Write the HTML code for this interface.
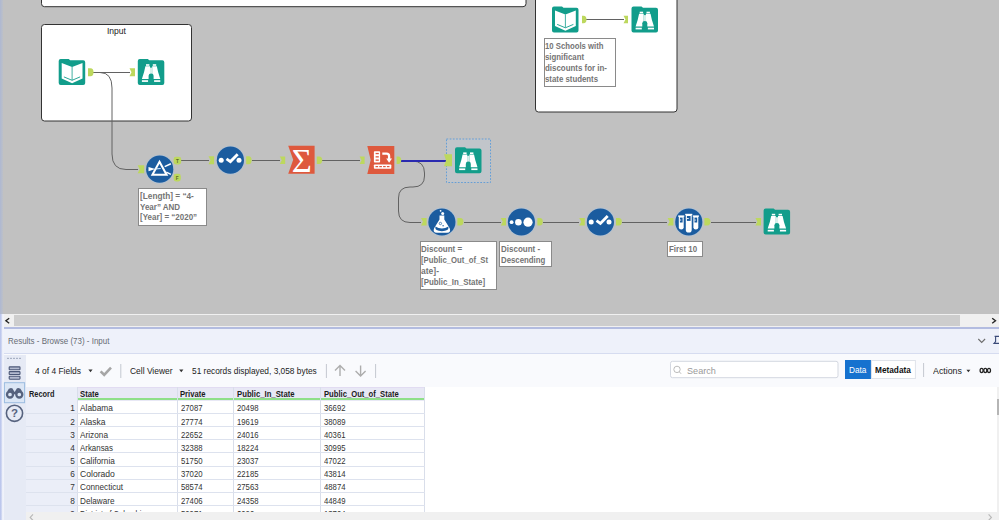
<!DOCTYPE html>
<html><head><meta charset="utf-8"><title>Workflow</title><style>
html,body{margin:0;padding:0}
body{width:999px;height:520px;overflow:hidden;position:relative;background:#c1c1c1;font-family:"Liberation Sans",sans-serif}
#cv{position:absolute;left:0;top:0}
.t{position:absolute;white-space:pre;line-height:1.15;display:inline-block}
.ann{position:absolute;box-sizing:border-box;background:#fff;border:1px solid #8a8a8a}
</style></head><body>
<svg id="cv" width="999" height="314" viewBox="0 0 999 314">
<rect x="41.5" y="-5" width="484.5" height="11.7" rx="3" fill="#fff" stroke="#333" stroke-width="1"/>
<rect x="41.5" y="24.5" width="150" height="96.5" rx="3" fill="#fff" stroke="#333" stroke-width="1"/>
<rect x="535.5" y="-5" width="141.5" height="117" rx="3" fill="#fff" stroke="#333" stroke-width="1"/>
<rect x="446.5" y="139" width="44" height="43.5" fill="#c1c5ca" stroke="#5a9ad8" stroke-width="0.9" stroke-dasharray="1.7,1.5"/>
<path d="M93,72.5 H130" fill="none" stroke="#626262" stroke-width="1"/>
<path d="M93,72.5 H100 Q112,72.5 112,88 V154 Q112,169.5 126,169.5 H138" fill="none" stroke="#626262" stroke-width="1"/>
<path d="M586,19.5 H624" fill="none" stroke="#626262" stroke-width="1"/>
<path d="M181,160.5 H209" fill="none" stroke="#626262" stroke-width="1"/>
<path d="M252,160.5 H280" fill="none" stroke="#626262" stroke-width="1"/>
<path d="M322,160.5 H360" fill="none" stroke="#626262" stroke-width="1"/>
<path d="M401,161 H412 Q424.5,161 424.5,173 V176 Q424.5,187 413,187 H410 Q398.5,187 398.5,198 V211 Q398.5,222.5 410,222.5 H421" fill="none" stroke="#626262" stroke-width="1"/>
<path d="M401,161 H446" fill="none" stroke="#2a2ab0" stroke-width="2"/>
<path d="M464,222.5 H501" fill="none" stroke="#626262" stroke-width="1"/>
<path d="M543,222.5 H579" fill="none" stroke="#626262" stroke-width="1"/>
<path d="M622,222.5 H667" fill="none" stroke="#626262" stroke-width="1"/>
<path d="M711,222.5 H756" fill="none" stroke="#626262" stroke-width="1"/>
<path d="M60.7,59 h8 l1.5,1.2 h13.0 q2,0 2,2 v20.8 q0,2 -2,2 h-22.5 q-2,0 -2,-2 v-22 q0,-2 2,-2z" fill="#129d8b"/><path d="M61.7,63 L72.1,66.9 L82.5,63 V78.6 L72.1,83.3 L61.7,78.6z" fill="#fff"/><path d="M72.1,66.9 v13.2" stroke="#129d8b" stroke-width="0.8" fill="none"/><path d="M63.9,76.9 L72.1,80.3 L80.1,76.9" stroke="#129d8b" stroke-width="0.9" fill="none"/>
<path d="M88,68.3h2.5q3,0 3,4.0q0,4.0 -3,4.0h-2.5z" fill="#bdd85e"/>
<path d="M129.5,68.3h5.5v8h-5.5l2,-4.0z" fill="#bdd85e"/>
<path d="M139.8,59 h8 l1.5,1.2 h13.0 q2,0 2,2 v20.8 q0,2 -2,2 h-22.5 q-2,0 -2,-2 v-22 q0,-2 2,-2z" fill="#129d8b"/><path d="M145.4,66.3 L150,66.3 L150,79 L141.9,79 Q144.5,71.5 145.4,66.3 Z" fill="#fff"/><rect x="146" y="64.2" width="3.4" height="1.6" fill="#fff"/><rect x="141.9" y="80.2" width="6.2" height="1.7" fill="#fff"/><path d="M156.8,66.3 L152.2,66.3 L152.2,79 L160.3,79 Q157.7,71.5 156.8,66.3 Z" fill="#fff"/><rect x="152.8" y="64.2" width="3.4" height="1.6" fill="#fff"/><rect x="154.1" y="80.2" width="6.2" height="1.7" fill="#fff"/><rect x="149.9" y="67.6" width="2.4" height="7" fill="#d8efeb"/><path d="M148.6,82 v-6.3 q0,-2.3 2.5,-2.3 q2.5,0 2.5,2.3 v6.3z" fill="#129d8b"/>
<path d="M554,6.5 h8 l1.5,1.2 h13.0 q2,0 2,2 v20.8 q0,2 -2,2 h-22.5 q-2,0 -2,-2 v-22 q0,-2 2,-2z" fill="#129d8b"/><path d="M555,10.5 L565.4,14.4 L575.8,10.5 V26.1 L565.4,30.8 L555,26.1z" fill="#fff"/><path d="M565.4,14.4 v13.2" stroke="#129d8b" stroke-width="0.8" fill="none"/><path d="M557.2,24.4 L565.4,27.8 L573.4,24.4" stroke="#129d8b" stroke-width="0.9" fill="none"/>
<path d="M582,15.7h1.5q3,0 3,3.8q0,3.8 -3,3.8h-1.5z" fill="#bdd85e"/>
<path d="M623.5,15.7h4.5v7.6h-4.5l2,-3.8z" fill="#bdd85e"/>
<path d="M633.5,6.5 h8 l1.5,1.2 h13.0 q2,0 2,2 v20.8 q0,2 -2,2 h-22.5 q-2,0 -2,-2 v-22 q0,-2 2,-2z" fill="#129d8b"/><path d="M639.1,13.8 L643.7,13.8 L643.7,26.5 L635.6,26.5 Q638.2,19.0 639.1,13.8 Z" fill="#fff"/><rect x="639.7" y="11.7" width="3.4" height="1.6" fill="#fff"/><rect x="635.6" y="27.7" width="6.2" height="1.7" fill="#fff"/><path d="M650.5,13.8 L645.9,13.8 L645.9,26.5 L654.0,26.5 Q651.4,19.0 650.5,13.8 Z" fill="#fff"/><rect x="646.5" y="11.7" width="3.4" height="1.6" fill="#fff"/><rect x="647.8" y="27.7" width="6.2" height="1.7" fill="#fff"/><rect x="643.6" y="15.1" width="2.4" height="7" fill="#d8efeb"/><path d="M642.3,29.5 v-6.3 q0,-2.3 2.5,-2.3 q2.5,0 2.5,2.3 v6.3z" fill="#129d8b"/>
<path d="M137.7,165.3h6.5v8h-6.5l2,-4.0z" fill="#bdd85e"/>
<circle cx="159.7" cy="169.2" r="14.5" fill="#a9c3de" opacity="0.55"/><circle cx="159.7" cy="169.2" r="13.6" fill="#1b5c9f"/><path d="M159.5,161.8 L166.6,174.7 H152.4 Z" fill="none" stroke="#fff" stroke-width="2" stroke-linejoin="miter"/><path d="M148.5,166.9 L155.3,169.0 L148.5,171.2 Z" fill="#fff"/><path d="M155.3,169.0 L160.7,168.5" stroke="#d6ecff" stroke-width="1.1"/><path d="M164.7,166.6 L170.9,163.8" stroke="#fff" stroke-width="1.5"/><path d="M166.3,172.1 L170.9,174.4" stroke="#fff" stroke-width="1.5"/>
<rect x="173.6" y="156.8" width="7.6" height="7.6" rx="2.4" fill="#bdd85e"/><rect x="173.6" y="173.8" width="7.2" height="7.6" rx="2.4" fill="#bdd85e"/>
<text x="177.4" y="162.6" font-family="'Liberation Sans',sans-serif" font-size="4.6" font-weight="700" fill="#5d6a28" text-anchor="middle">T</text>
<text x="177.2" y="179.6" font-family="'Liberation Sans',sans-serif" font-size="4.6" font-weight="700" fill="#5d6a28" text-anchor="middle">F</text>
<path d="M208.5,156.3h5.6v8h-5.6l2,-4.0z" fill="#bdd85e"/>
<circle cx="230.4" cy="160.2" r="14.5" fill="#a9c3de" opacity="0.55"/><circle cx="230.4" cy="160.2" r="13.6" fill="#1b5c9f"/><circle cx="221.2" cy="160.2" r="2.5" fill="#fff"/><circle cx="239.0" cy="160.2" r="2.5" fill="#fff"/><path d="M226.5,158.8 L230.4,161.6 L237.7,154.2" fill="none" stroke="#fff" stroke-width="2.8"/>
<path d="M246.2,156.3h2.4q3,0 3,4.0q0,4.0 -3,4.0h-2.4z" fill="#bdd85e"/>
<path d="M279.8,156.5h5.4v7.4h-5.4l2,-3.7z" fill="#bdd85e"/>
<path d="M288.2,145.8 H314.6 V173.8 H288.2 L293.2,159.8 Z" fill="#de593d"/><text x="301.9" y="171.9" font-family="'Liberation Serif',serif" font-size="34.5" fill="#fff" text-anchor="middle">Σ</text>
<path d="M316.8,156.5h2.4q3,0 3,3.7q0,3.7 -3,3.7h-2.4z" fill="#bdd85e"/>
<path d="M359.6,156.6h5v7.4h-5l2,-3.7z" fill="#bdd85e"/>
<path d="M367.3,146 H394.3 V174 H367.3 L370.7,160.0 Z" fill="#de593d"/><rect x="373.9" y="151.2" width="6.2" height="11.4" rx="0.8" fill="#fff"/><rect x="375.6" y="152.9" width="3.2" height="1.3" fill="#de593d"/><rect x="375.6" y="156.2" width="3.2" height="1.3" fill="#de593d"/><rect x="375.6" y="159.5" width="3.2" height="1.3" fill="#de593d"/><rect x="373.9" y="164.4" width="17.4" height="4.4" rx="0.8" fill="#fff"/><rect x="375.5" y="166" width="2.6" height="1.2" fill="#de593d"/><rect x="379.3" y="166" width="2.6" height="1.2" fill="#de593d"/><rect x="383.1" y="166" width="2.6" height="1.2" fill="#de593d"/><rect x="386.9" y="166" width="2.6" height="1.2" fill="#de593d"/><path d="M382.3,153.6 h4.2 q2.6,0 2.6,2.6 v3" fill="none" stroke="#fff" stroke-width="2.3"/><path d="M386.2,158.4 h5.8 l-2.9,4.4z" fill="#fff"/>
<path d="M396.6,156.6h1.6q3,0 3,3.7q0,3.7 -3,3.7h-1.6z" fill="#bdd85e"/>
<path d="M444,154.2h8v12h-8l2,-6.0z" fill="#bdd85e"/>
<path d="M457,147.2 h8 l1.5,1.2 h13.0 q2,0 2,2 v20.8 q0,2 -2,2 h-22.5 q-2,0 -2,-2 v-22 q0,-2 2,-2z" fill="#129d8b"/><path d="M462.6,154.5 L467.2,154.5 L467.2,167.2 L459.1,167.2 Q461.7,159.7 462.6,154.5 Z" fill="#fff"/><rect x="463.2" y="152.4" width="3.4" height="1.6" fill="#fff"/><rect x="459.1" y="168.4" width="6.2" height="1.7" fill="#fff"/><path d="M474.0,154.5 L469.4,154.5 L469.4,167.2 L477.5,167.2 Q474.9,159.7 474.0,154.5 Z" fill="#fff"/><rect x="470.0" y="152.4" width="3.4" height="1.6" fill="#fff"/><rect x="471.3" y="168.4" width="6.2" height="1.7" fill="#fff"/><rect x="467.1" y="155.8" width="2.4" height="7" fill="#d8efeb"/><path d="M465.8,170.2 v-6.3 q0,-2.3 2.5,-2.3 q2.5,0 2.5,2.3 v6.3z" fill="#129d8b"/>
<path d="M421,218.1h5.6v7.4h-5.6l2,-3.7z" fill="#bdd85e"/>
<circle cx="441.9" cy="222" r="14.5" fill="#a9c3de" opacity="0.55"/><circle cx="441.9" cy="222" r="13.6" fill="#1b5c9f"/><circle cx="440.6" cy="210.8" r="0.9" fill="#fff"/><circle cx="442.7" cy="213.4" r="1.5" fill="#fff"/><path d="M439.5,215.6 h4.8 v4 l5.4,8.6 q1.6,4.4 -2.6,4.6 h-10.4 q-4.2,-0.2 -2.6,-4.6 l5.4,-8.6z" fill="#fff"/><path d="M435.3,226.6 q6.6,3.8 13.2,0 q0.6,4.6 -6.6,4.7 q-7.2,-0.1 -6.6,-4.7z" fill="#1b5c9f"/><circle cx="440.4" cy="223.5" r="1.2" fill="none" stroke="#1b5c9f" stroke-width="0.7"/><circle cx="443.1" cy="225.8" r="0.7" fill="#1b5c9f"/>
<path d="M457.4,218.1h3q3,0 3,3.7q0,3.7 -3,3.7h-3z" fill="#bdd85e"/>
<path d="M500.8,218.1h5.2v7.4h-5.2l2,-3.7z" fill="#bdd85e"/>
<circle cx="521.4" cy="222" r="14.5" fill="#a9c3de" opacity="0.55"/><circle cx="521.4" cy="222" r="13.6" fill="#1b5c9f"/><circle cx="511.6" cy="222.2" r="1.9" fill="#fff"/><circle cx="518.4" cy="222.2" r="3.3" fill="#fff"/><circle cx="528.0" cy="222.2" r="4.6" fill="#fff"/>
<path d="M537.4,218.1h2.4q3,0 3,3.7q0,3.7 -3,3.7h-2.4z" fill="#bdd85e"/>
<path d="M579.2,218.1h5.6v7.4h-5.6l2,-3.7z" fill="#bdd85e"/>
<circle cx="600.4" cy="222" r="14.5" fill="#a9c3de" opacity="0.55"/><circle cx="600.4" cy="222" r="13.6" fill="#1b5c9f"/><circle cx="591.2" cy="222" r="2.5" fill="#fff"/><circle cx="609.0" cy="222" r="2.5" fill="#fff"/><path d="M596.5,220.6 L600.4,223.4 L607.7,216" fill="none" stroke="#fff" stroke-width="2.8"/>
<path d="M616,218.1h2.8q3,0 3,3.7q0,3.7 -3,3.7h-2.8z" fill="#bdd85e"/>
<path d="M667.6,218.1h5.8v7.4h-5.8l2,-3.7z" fill="#bdd85e"/>
<circle cx="688.8" cy="222" r="14.5" fill="#a9c3de" opacity="0.55"/><circle cx="688.8" cy="222" r="13.6" fill="#1b5c9f"/><path d="M678.8,216 h4.9 v11.15 a2.45,2.45 0 0 1 -4.9,0z" fill="#fff"/><rect x="678.2" y="215.4" width="6.1" height="1.4" fill="#fff"/><rect x="679.9" y="217.6" width="2.7" height="4.9" fill="#1b5c9f"/><rect x="679.9" y="219.6" width="1.35" height="0.9" fill="#fff"/><path d="M685.8,214.4 h5.9 v15.25 a2.95,2.95 0 0 1 -5.9,0z" fill="#fff"/><rect x="685.2" y="213.8" width="7.1" height="1.4" fill="#fff"/><rect x="686.9" y="216.0" width="3.7" height="4.9" fill="#1b5c9f"/><rect x="686.9" y="218.0" width="1.85" height="0.9" fill="#fff"/><path d="M693.4,216 h4.9 v11.15 a2.45,2.45 0 0 1 -4.9,0z" fill="#fff"/><rect x="692.8" y="215.4" width="6.1" height="1.4" fill="#fff"/><rect x="694.5" y="217.6" width="2.7" height="4.9" fill="#1b5c9f"/><rect x="694.5" y="219.6" width="1.35" height="0.9" fill="#fff"/>
<path d="M704.4,218.1h3q3,0 3,3.7q0,3.7 -3,3.7h-3z" fill="#bdd85e"/>
<path d="M755.4,218.1h5.6v7.4h-5.6l2,-3.7z" fill="#bdd85e"/>
<path d="M765.6,208.6 h8 l1.5,1.2 h13.0 q2,0 2,2 v20.8 q0,2 -2,2 h-22.5 q-2,0 -2,-2 v-22 q0,-2 2,-2z" fill="#129d8b"/><path d="M771.2,215.9 L775.8,215.9 L775.8,228.6 L767.7,228.6 Q770.3,221.1 771.2,215.9 Z" fill="#fff"/><rect x="771.8" y="213.8" width="3.4" height="1.6" fill="#fff"/><rect x="767.7" y="229.8" width="6.2" height="1.7" fill="#fff"/><path d="M782.6,215.9 L778.0,215.9 L778.0,228.6 L786.1,228.6 Q783.5,221.1 782.6,215.9 Z" fill="#fff"/><rect x="778.6" y="213.8" width="3.4" height="1.6" fill="#fff"/><rect x="779.9" y="229.8" width="6.2" height="1.7" fill="#fff"/><rect x="775.7" y="217.2" width="2.4" height="7" fill="#d8efeb"/><path d="M774.4,231.6 v-6.3 q0,-2.3 2.5,-2.3 q2.5,0 2.5,2.3 v6.3z" fill="#129d8b"/>
</svg>
<div class="ann" style="left:543.7px;top:38.2px;width:72.2px;height:48.6px"></div><span class="t" id="t0" style="left:545.0px;top:41.8px;font-size:8.6px;font-weight:700;color:#747474;transform-origin:left top;transform:scaleX(0.9);">10 Schools with</span><span class="t" id="t1" style="left:545.0px;top:52.7px;font-size:8.6px;font-weight:700;color:#747474;transform-origin:left top;transform:scaleX(0.91);">significant</span><span class="t" id="t2" style="left:545.0px;top:63.6px;font-size:8.6px;font-weight:700;color:#747474;transform-origin:left top;transform:scaleX(0.92);">discounts for in-</span><span class="t" id="t3" style="left:545.0px;top:74.5px;font-size:8.6px;font-weight:700;color:#747474;transform-origin:left top;transform:scaleX(0.91);">state students</span>
<div class="ann" style="left:138.3px;top:188px;width:68.6px;height:38px"></div><span class="t" id="t4" style="left:139.6px;top:191.6px;font-size:8.6px;font-weight:700;color:#747474;transform-origin:left top;transform:scaleX(0.96);">[Length] = “4-</span><span class="t" id="t5" style="left:139.6px;top:202.5px;font-size:8.6px;font-weight:700;color:#747474;transform-origin:left top;transform:scaleX(0.93);">Year” AND</span><span class="t" id="t6" style="left:139.6px;top:213.4px;font-size:8.6px;font-weight:700;color:#747474;transform-origin:left top;transform:scaleX(0.93);">[Year] = “2020”</span>
<div class="ann" style="left:420px;top:241.2px;width:76.6px;height:48.6px"></div><span class="t" id="t7" style="left:421.3px;top:244.8px;font-size:8.6px;font-weight:700;color:#747474;transform-origin:left top;transform:scaleX(0.93);">Discount =</span><span class="t" id="t8" style="left:421.3px;top:255.7px;font-size:8.6px;font-weight:700;color:#747474;transform-origin:left top;transform:scaleX(0.9);">[Public_Out_of_St</span><span class="t" id="t9" style="left:421.3px;top:266.6px;font-size:8.6px;font-weight:700;color:#747474;transform-origin:left top;transform:scaleX(0.99);">ate]-</span><span class="t" id="t10" style="left:421.3px;top:277.5px;font-size:8.6px;font-weight:700;color:#747474;transform-origin:left top;transform:scaleX(0.92);">[Public_In_State]</span>
<div class="ann" style="left:499.3px;top:241.3px;width:53.2px;height:26px"></div><span class="t" id="t11" style="left:500.6px;top:244.9px;font-size:8.6px;font-weight:700;color:#747474;transform-origin:left top;transform:scaleX(0.93);">Discount -</span><span class="t" id="t12" style="left:500.6px;top:255.8px;font-size:8.6px;font-weight:700;color:#747474;transform-origin:left top;transform:scaleX(0.91);">Descending</span>
<div class="ann" style="left:667.2px;top:241px;width:36px;height:15.8px"></div><span class="t" id="t13" style="left:668.5px;top:244.6px;font-size:8.6px;font-weight:700;color:#747474;transform-origin:left top;transform:scaleX(0.92);">First 10</span>
<span class="t" id="t14" style="left:106.6px;top:25.1px;font-size:9.6px;font-weight:400;color:#222;transform-origin:left top;transform:scaleX(0.89);">Input</span>
<div style="position:absolute;left:0;top:314px;width:999px;height:13px;background:#f0f0f0"></div>
<div style="position:absolute;left:14px;top:315px;width:946px;height:10.5px;background:#cdcdcd"></div>
<svg style="position:absolute;left:0;top:314px" width="999" height="13"><path d="M9.2,4.2 L5.9,6.7 L9.2,9.2" fill="none" stroke="#222" stroke-width="1.35"/><path d="M992.2,4.2 L995.5,6.7 L992.2,9.2" fill="none" stroke="#222" stroke-width="1.35"/></svg>
<div style="position:absolute;left:0;top:326.5px;width:999px;height:2px;background:#b3bce0"></div>
<div style="position:absolute;left:0;top:328.5px;width:999px;height:24px;background:#eef1fa"></div>
<div style="position:absolute;left:0;top:352.5px;width:999px;height:1px;background:#d6dcf0"></div>
<span class="t" id="t15" style="left:8px;top:336.4px;font-size:9.4px;font-weight:400;color:#666b73;transform-origin:left top;transform:scaleX(0.85);">Results - Browse (73) - Input</span>
<svg style="position:absolute;left:970px;top:332px" width="29" height="18"><path d="M8.3,7 L11.7,10.4 L15.1,7" fill="none" stroke="#6c6c6c" stroke-width="1.1"/><path d="M24.6,4.4 h4.4 M25.6,4.4 v5.2 l-1.6,1.8 h5" fill="none" stroke="#3a4a78" stroke-width="1.1"/></svg>
<div style="position:absolute;left:0;top:353.5px;width:999px;height:33px;background:#f9fafd"></div>
<div style="position:absolute;left:0;top:386.5px;width:999px;height:134px;background:#fff"></div>
<div style="position:absolute;left:4px;top:355px;width:21.5px;height:165px;background:#e6eaf5"></div>
<div style="position:absolute;left:0;top:0;width:3px;height:314px;background:linear-gradient(90deg,#aeb8d2,#bcc0c8)"></div>
<div style="position:absolute;left:0;top:314px;width:4px;height:206px;background:linear-gradient(90deg,#b9c4ec 0,#c2ccee 30%,#ebeef9 55%,#f2f4fb 100%)"></div>
<svg style="position:absolute;left:0;top:350px" width="30" height="80"><rect x="7.2" y="7.8" width="1.6" height="1.2" fill="#9aa3b8"/><rect x="10.2" y="7.8" width="1.6" height="1.2" fill="#9aa3b8"/><rect x="13.2" y="7.8" width="1.6" height="1.2" fill="#9aa3b8"/><rect x="16.2" y="7.8" width="1.6" height="1.2" fill="#9aa3b8"/><rect x="19.2" y="7.8" width="1.6" height="1.2" fill="#9aa3b8"/><rect x="9.2" y="16.9" width="10.8" height="2.9" rx="0.6" fill="#b4bbd0" stroke="#4b5777" stroke-width="1.1"/><rect x="9.2" y="21.6" width="10.8" height="2.9" rx="0.6" fill="#b4bbd0" stroke="#4b5777" stroke-width="1.1"/><rect x="9.2" y="26.3" width="10.8" height="2.9" rx="0.6" fill="#b4bbd0" stroke="#4b5777" stroke-width="1.1"/><rect x="4.4" y="32.7" width="20.2" height="20" fill="#dbe6f5" stroke="#9bbce0" stroke-width="1"/><g fill="none" stroke="#56627e" stroke-width="2.3"><circle cx="10" cy="44.5" r="3"/><circle cx="19.3" cy="44.5" r="3"/><path d="M8.6,41.4 Q9.4,38.9 11.6,39.3 L13.6,42.6 M20.7,41.4 Q19.9,38.9 17.7,39.3 L15.7,42.6 M13,43.2 h3.4"/></g><circle cx="14.5" cy="63.3" r="8.1" fill="none" stroke="#56627e" stroke-width="1.6"/><text x="14.5" y="67.4" font-family="'Liberation Sans',sans-serif" font-size="11.5" font-weight="700" fill="#56627e" text-anchor="middle">?</text></svg>
<span class="t" id="t16" style="left:35px;top:365.5px;font-size:9.4px;font-weight:400;color:#222;transform-origin:left top;transform:scaleX(0.9);">4 of 4 Fields</span>
<span class="t" id="t17" style="left:130px;top:365.5px;font-size:9.4px;font-weight:400;color:#222;transform-origin:left top;transform:scaleX(0.9);">Cell Viewer</span>
<span class="t" id="t18" style="left:192px;top:365.5px;font-size:9.4px;font-weight:400;color:#222;transform-origin:left top;transform:scaleX(0.89);">51 records displayed, 3,058 bytes</span>
<svg style="position:absolute;left:0;top:353px" width="999" height="34"><path d="M88.4,16.6 h4.2 l-2.1,2.6z" fill="#333"/><path d="M100.6,18.4 L104.2,21.8 L111,14.6" fill="none" stroke="#a6a6a6" stroke-width="2.6"/><path d="M120.8,11 v14" stroke="#c4c8d0" stroke-width="1"/><path d="M179.2,16.6 h4.2 l-2.1,2.6z" fill="#333"/><path d="M326.4,11 v14 M375.6,11 v14" stroke="#c4c8d0" stroke-width="1"/><path d="M340,23 v-10 M335,17.6 L340,12.6 L345,17.6" fill="none" stroke="#adadad" stroke-width="1.4"/><path d="M360.6,12.6 v10 M355.6,18 L360.6,23 L365.6,18" fill="none" stroke="#adadad" stroke-width="1.4"/><rect x="670.5" y="8.3" width="167.5" height="16.4" rx="2" fill="#fff" stroke="#d3d7e0" stroke-width="1"/><circle cx="677" cy="16.4" r="3.2" fill="none" stroke="#b4b4b4" stroke-width="0.9"/><path d="M679.3,18.8 l1.8,2" stroke="#b4b4b4" stroke-width="0.9"/><rect x="845" y="7" width="26.4" height="19" fill="#1672cf"/><rect x="871.4" y="7.5" width="44" height="18" fill="#fff" stroke="#dfe3ea" stroke-width="1"/><path d="M923.6,10 v14" stroke="#c4c8d0" stroke-width="1"/><path d="M966.4,16.8 h4 l-2,2.4z" fill="#333"/><ellipse cx="981.6" cy="17.4" rx="1.5" ry="2.1" fill="none" stroke="#222" stroke-width="1.25"/><ellipse cx="985.3" cy="17.4" rx="1.5" ry="2.1" fill="none" stroke="#222" stroke-width="1.25"/><ellipse cx="989.0" cy="17.4" rx="1.5" ry="2.1" fill="none" stroke="#222" stroke-width="1.25"/></svg>
<span class="t" id="t19" style="left:686.7px;top:364.6px;font-size:9.8px;font-weight:400;color:#9a9a9a;transform-origin:left top;transform:scaleX(0.93);">Search</span>
<span class="t" id="t20" style="left:849.2px;top:365.1px;font-size:9.4px;font-weight:400;color:#fff;transform-origin:left top;transform:scaleX(0.88);">Data</span>
<span class="t" id="t21" style="left:875.4px;top:365.1px;font-size:9.2px;font-weight:700;color:#111;transform-origin:left top;transform:scaleX(0.9);">Metadata</span>
<span class="t" id="t22" style="left:933px;top:364.6px;font-size:9.8px;font-weight:400;color:#222;transform-origin:left top;transform:scaleX(0.9);">Actions</span>
<div style="position:absolute;left:26px;top:387px;width:398.6px;height:13px;background:#e8e8f5;border-top:1px solid #e2dcf2"></div><div style="position:absolute;left:26px;top:387px;width:51.3px;height:14px;background:#ebeef8"></div>
<div style="position:absolute;left:26px;top:400px;width:51.3px;height:112px;background:#ebeef8"></div>
<div style="position:absolute;left:77.3px;top:398.4px;width:347.3px;height:2.1px;background:#8fdf88"></div>
<span class="t" id="t23" style="left:29px;top:389px;font-size:8.7px;font-weight:700;color:#1c1c1c;transform-origin:left top;transform:scaleX(0.85);">Record</span>
<div style="position:absolute;left:76.8px;top:387px;width:1px;height:125px;background:#d9deea"></div>
<span class="t" id="t24" style="left:79.9px;top:389px;font-size:8.7px;font-weight:700;color:#1c1c1c;transform-origin:left top;transform:scaleX(0.89);">State</span>
<div style="position:absolute;left:177.0px;top:387px;width:1px;height:125px;background:#d9deea"></div>
<span class="t" id="t25" style="left:180.1px;top:389px;font-size:8.7px;font-weight:700;color:#1c1c1c;transform-origin:left top;transform:scaleX(0.88);">Private</span>
<div style="position:absolute;left:233.3px;top:387px;width:1px;height:125px;background:#d9deea"></div>
<span class="t" id="t26" style="left:236.8px;top:389px;font-size:8.7px;font-weight:700;color:#1c1c1c;transform-origin:left top;transform:scaleX(0.89);">Public_In_State</span>
<div style="position:absolute;left:320.0px;top:387px;width:1px;height:125px;background:#d9deea"></div>
<span class="t" id="t27" style="left:323.5px;top:389px;font-size:8.7px;font-weight:700;color:#1c1c1c;transform-origin:left top;transform:scaleX(0.88);">Public_Out_of_State</span>
<div style="position:absolute;left:424.1px;top:387px;width:1px;height:125px;background:#d9deea"></div>
<div style="position:absolute;left:26px;top:412.97px;width:398.6px;height:1px;background:#dde2ee"></div>
<span class="t" id="t28" style="right:924.4px;top:403.4px;font-size:8.7px;font-weight:400;color:#333;transform-origin:right top;transform:scaleX(0.95);">1</span>
<span class="t" id="t29" style="left:79.9px;top:403.4px;font-size:8.7px;font-weight:400;color:#333;transform-origin:left top;transform:scaleX(0.96);">Alabama</span>
<span class="t" id="t30" style="left:181.0px;top:403.4px;font-size:8.7px;font-weight:400;color:#333;transform-origin:left top;transform:scaleX(0.89);">27087</span>
<span class="t" id="t31" style="left:237.0px;top:403.4px;font-size:8.7px;font-weight:400;color:#333;transform-origin:left top;transform:scaleX(0.89);">20498</span>
<span class="t" id="t32" style="left:323.7px;top:403.4px;font-size:8.7px;font-weight:400;color:#333;transform-origin:left top;transform:scaleX(0.89);">36692</span>
<div style="position:absolute;left:26px;top:426.14px;width:398.6px;height:1px;background:#dde2ee"></div>
<span class="t" id="t33" style="right:924.4px;top:416.57px;font-size:8.7px;font-weight:400;color:#333;transform-origin:right top;transform:scaleX(0.95);">2</span>
<span class="t" id="t34" style="left:79.9px;top:416.57px;font-size:8.7px;font-weight:400;color:#333;transform-origin:left top;transform:scaleX(0.98);">Alaska</span>
<span class="t" id="t35" style="left:181.0px;top:416.57px;font-size:8.7px;font-weight:400;color:#333;transform-origin:left top;transform:scaleX(0.89);">27774</span>
<span class="t" id="t36" style="left:237.0px;top:416.57px;font-size:8.7px;font-weight:400;color:#333;transform-origin:left top;transform:scaleX(0.89);">19619</span>
<span class="t" id="t37" style="left:323.7px;top:416.57px;font-size:8.7px;font-weight:400;color:#333;transform-origin:left top;transform:scaleX(0.89);">38089</span>
<div style="position:absolute;left:26px;top:439.31px;width:398.6px;height:1px;background:#dde2ee"></div>
<span class="t" id="t38" style="right:924.4px;top:429.74px;font-size:8.7px;font-weight:400;color:#333;transform-origin:right top;transform:scaleX(0.95);">3</span>
<span class="t" id="t39" style="left:79.9px;top:429.74px;font-size:8.7px;font-weight:400;color:#333;transform-origin:left top;transform:scaleX(0.95);">Arizona</span>
<span class="t" id="t40" style="left:181.0px;top:429.74px;font-size:8.7px;font-weight:400;color:#333;transform-origin:left top;transform:scaleX(0.89);">22652</span>
<span class="t" id="t41" style="left:237.0px;top:429.74px;font-size:8.7px;font-weight:400;color:#333;transform-origin:left top;transform:scaleX(0.89);">24016</span>
<span class="t" id="t42" style="left:323.7px;top:429.74px;font-size:8.7px;font-weight:400;color:#333;transform-origin:left top;transform:scaleX(0.89);">40361</span>
<div style="position:absolute;left:26px;top:452.48px;width:398.6px;height:1px;background:#dde2ee"></div>
<span class="t" id="t43" style="right:924.4px;top:442.91px;font-size:8.7px;font-weight:400;color:#333;transform-origin:right top;transform:scaleX(0.95);">4</span>
<span class="t" id="t44" style="left:79.9px;top:442.91px;font-size:8.7px;font-weight:400;color:#333;transform-origin:left top;transform:scaleX(0.91);">Arkansas</span>
<span class="t" id="t45" style="left:181.0px;top:442.91px;font-size:8.7px;font-weight:400;color:#333;transform-origin:left top;transform:scaleX(0.89);">32388</span>
<span class="t" id="t46" style="left:237.0px;top:442.91px;font-size:8.7px;font-weight:400;color:#333;transform-origin:left top;transform:scaleX(0.89);">18224</span>
<span class="t" id="t47" style="left:323.7px;top:442.91px;font-size:8.7px;font-weight:400;color:#333;transform-origin:left top;transform:scaleX(0.89);">30995</span>
<div style="position:absolute;left:26px;top:465.65px;width:398.6px;height:1px;background:#dde2ee"></div>
<span class="t" id="t48" style="right:924.4px;top:456.08px;font-size:8.7px;font-weight:400;color:#333;transform-origin:right top;transform:scaleX(0.95);">5</span>
<span class="t" id="t49" style="left:79.9px;top:456.08px;font-size:8.7px;font-weight:400;color:#333;transform-origin:left top;transform:scaleX(0.95);">California</span>
<span class="t" id="t50" style="left:181.0px;top:456.08px;font-size:8.7px;font-weight:400;color:#333;transform-origin:left top;transform:scaleX(0.89);">51750</span>
<span class="t" id="t51" style="left:237.0px;top:456.08px;font-size:8.7px;font-weight:400;color:#333;transform-origin:left top;transform:scaleX(0.89);">23037</span>
<span class="t" id="t52" style="left:323.7px;top:456.08px;font-size:8.7px;font-weight:400;color:#333;transform-origin:left top;transform:scaleX(0.89);">47022</span>
<div style="position:absolute;left:26px;top:478.82px;width:398.6px;height:1px;background:#dde2ee"></div>
<span class="t" id="t53" style="right:924.4px;top:469.25px;font-size:8.7px;font-weight:400;color:#333;transform-origin:right top;transform:scaleX(0.95);">6</span>
<span class="t" id="t54" style="left:79.9px;top:469.25px;font-size:8.7px;font-weight:400;color:#333;transform-origin:left top;transform:scaleX(0.99);">Colorado</span>
<span class="t" id="t55" style="left:181.0px;top:469.25px;font-size:8.7px;font-weight:400;color:#333;transform-origin:left top;transform:scaleX(0.89);">37020</span>
<span class="t" id="t56" style="left:237.0px;top:469.25px;font-size:8.7px;font-weight:400;color:#333;transform-origin:left top;transform:scaleX(0.89);">22185</span>
<span class="t" id="t57" style="left:323.7px;top:469.25px;font-size:8.7px;font-weight:400;color:#333;transform-origin:left top;transform:scaleX(0.89);">43814</span>
<div style="position:absolute;left:26px;top:491.99px;width:398.6px;height:1px;background:#dde2ee"></div>
<span class="t" id="t58" style="right:924.4px;top:482.42px;font-size:8.7px;font-weight:400;color:#333;transform-origin:right top;transform:scaleX(0.95);">7</span>
<span class="t" id="t59" style="left:79.9px;top:482.42px;font-size:8.7px;font-weight:400;color:#333;transform-origin:left top;transform:scaleX(0.94);">Connecticut</span>
<span class="t" id="t60" style="left:181.0px;top:482.42px;font-size:8.7px;font-weight:400;color:#333;transform-origin:left top;transform:scaleX(0.89);">58574</span>
<span class="t" id="t61" style="left:237.0px;top:482.42px;font-size:8.7px;font-weight:400;color:#333;transform-origin:left top;transform:scaleX(0.89);">27563</span>
<span class="t" id="t62" style="left:323.7px;top:482.42px;font-size:8.7px;font-weight:400;color:#333;transform-origin:left top;transform:scaleX(0.89);">48874</span>
<div style="position:absolute;left:26px;top:505.16px;width:398.6px;height:1px;background:#dde2ee"></div>
<span class="t" id="t63" style="right:924.4px;top:495.59px;font-size:8.7px;font-weight:400;color:#333;transform-origin:right top;transform:scaleX(0.95);">8</span>
<span class="t" id="t64" style="left:79.9px;top:495.59px;font-size:8.7px;font-weight:400;color:#333;transform-origin:left top;transform:scaleX(0.94);">Delaware</span>
<span class="t" id="t65" style="left:181.0px;top:495.59px;font-size:8.7px;font-weight:400;color:#333;transform-origin:left top;transform:scaleX(0.89);">27406</span>
<span class="t" id="t66" style="left:237.0px;top:495.59px;font-size:8.7px;font-weight:400;color:#333;transform-origin:left top;transform:scaleX(0.89);">24358</span>
<span class="t" id="t67" style="left:323.7px;top:495.59px;font-size:8.7px;font-weight:400;color:#333;transform-origin:left top;transform:scaleX(0.89);">44849</span>
<div style="position:absolute;left:26px;top:518.33px;width:398.6px;height:1px;background:#dde2ee"></div>
<span class="t" id="t68" style="right:924.4px;top:508.76px;font-size:8.7px;font-weight:400;color:#333;transform-origin:right top;transform:scaleX(0.95);">9</span>
<span class="t" id="t69" style="left:79.9px;top:508.76px;font-size:8.7px;font-weight:400;color:#333;transform-origin:left top;transform:scaleX(0.87);">District of Columbia</span>
<span class="t" id="t70" style="left:181.0px;top:508.76px;font-size:8.7px;font-weight:400;color:#333;transform-origin:left top;transform:scaleX(0.89);">50971</span>
<span class="t" id="t71" style="left:237.0px;top:508.76px;font-size:8.7px;font-weight:400;color:#333;transform-origin:left top;transform:scaleX(0.89);">6020</span>
<span class="t" id="t72" style="left:323.7px;top:508.76px;font-size:8.7px;font-weight:400;color:#333;transform-origin:left top;transform:scaleX(0.89);">13704</span>
<div style="position:absolute;left:25.5px;top:512px;width:974px;height:8px;background:#f0f0f0"></div>
<svg style="position:absolute;left:0;top:512px" width="999" height="8"><path d="M33,2.4 L30.2,5.4 L33,8.4" fill="none" stroke="#b8b8b8" stroke-width="1.2"/><path d="M988.6,2.4 L991.4,5.4 L988.6,8.4" fill="none" stroke="#b8b8b8" stroke-width="1.2"/></svg>
<div style="position:absolute;left:996.5px;top:387px;width:2.5px;height:125px;background:#f0f0f0"></div>
<div style="position:absolute;left:996.8px;top:399px;width:2.2px;height:16px;background:#b5b5b5"></div>
</body></html>
